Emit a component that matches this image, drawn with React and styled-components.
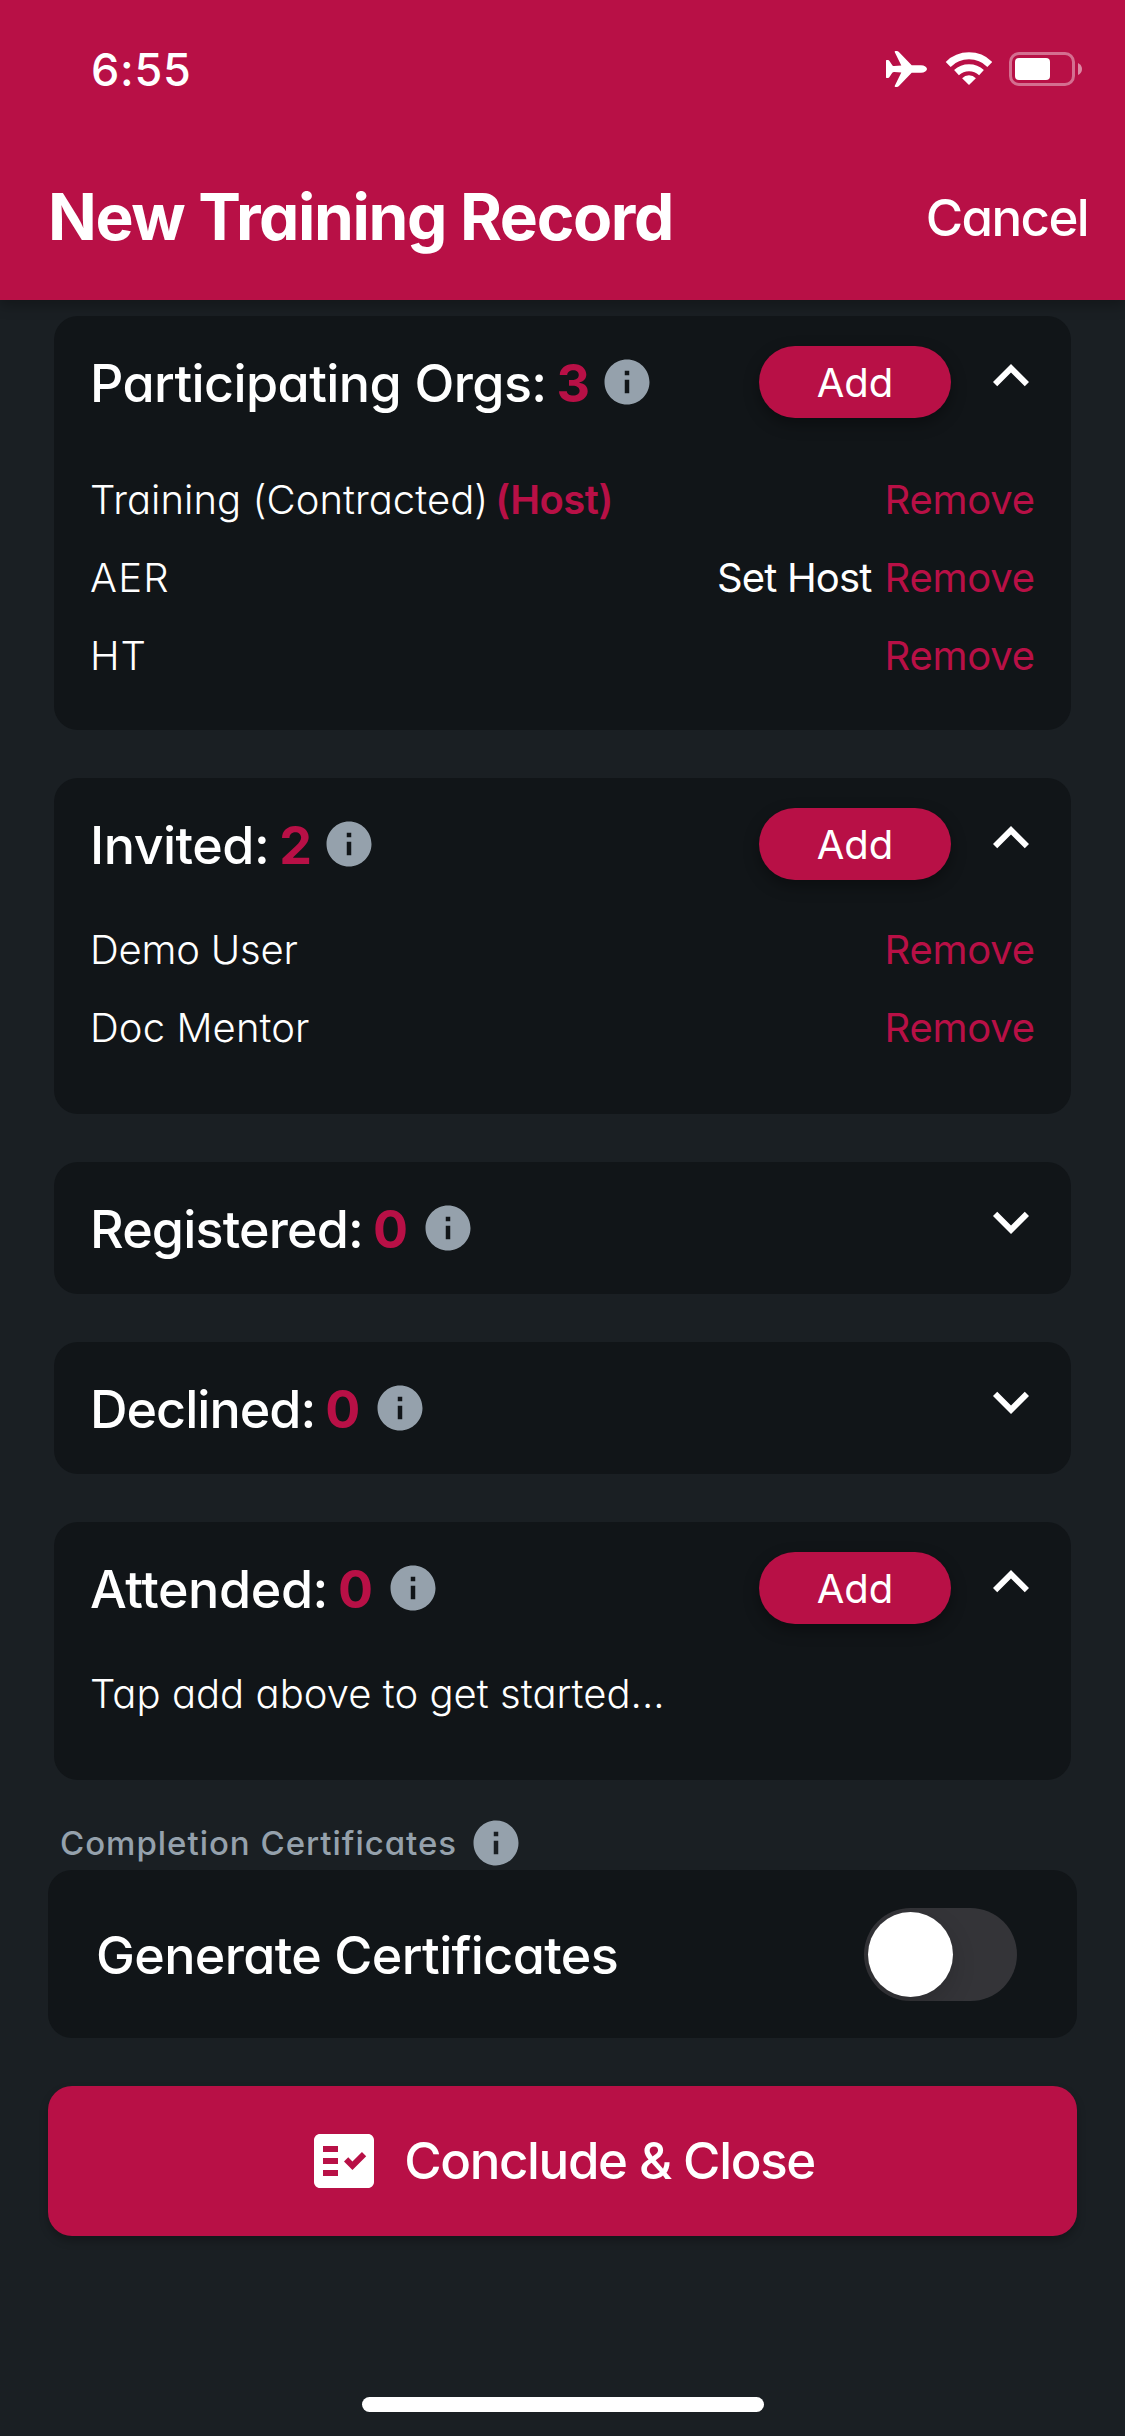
import React, { useState } from "react";
import styled, { createGlobalStyle } from "styled-components";
import { MdExpandLess, MdExpandMore, MdFactCheck, MdInfo } from "react-icons/md";

const color = {
  primary: "#b81046",
  background: "#1a1f23",
  card: "#111518",
  muted: "#95a1ac",
  track: "#343438",
  text: "#ffffff",
};

const GlobalStyle = createGlobalStyle`
  *, *::before, *::after { box-sizing: border-box; }
  body {
    margin: 0;
    background: ${color.background};
    color: ${color.text};
    font-family: Inter, "Liberation Sans", sans-serif;
    font-feature-settings: "cv11";
  }
`;

const Screen = styled.div`
  display: flex;
  flex-direction: column;
  width: 1125px;
  height: 2436px;
  overflow: hidden;
  background: ${color.background};
`;

const TopArea = styled.header`
  flex: none;
  height: 300px;
  background: ${color.primary};
  box-shadow: 0 6px 12px rgba(0, 0, 0, 0.25);
`;

const StatusBar = styled.div`
  display: flex;
  align-items: center;
  justify-content: space-between;
  height: 138px;
  padding: 0 42px 0 91px;
`;

const Clock = styled.span`
  font-size: 45px;
  font-weight: 500;
  letter-spacing: 0.7px;
`;

const StatusIcons = styled.div`
  display: flex;
  align-items: center;
  gap: 17px;

  svg { display: block; }
`;

const TitleBar = styled.div`
  display: flex;
  align-items: center;
  justify-content: space-between;
  height: 162px;
  padding: 0 37px 5px 48px;
`;

const Title = styled.h1`
  margin: 0;
  font-size: 64px;
  font-weight: 700;
  letter-spacing: -1.35px;
`;

const PlainButton = styled.button`
  margin: 0;
  padding: 0;
  border: 0;
  background: none;
  color: inherit;
  font-family: inherit;
  font-feature-settings: inherit;
  white-space: nowrap;
`;

const CancelButton = styled(PlainButton)`
  padding-top: 2px;
  font-size: 51px;
  font-weight: 500;
  letter-spacing: -1.6px;
`;

const Content = styled.main`
  display: flex;
  flex-direction: column;
  padding: 16px 48px 0;
`;

const Sections = styled.div`
  display: flex;
  flex-direction: column;
  gap: 48px;
  padding: 0 6px;
`;

const Card = styled.section`
  padding: 30px 36px ${(p) => p.$bottom}px;
  border-radius: 24px;
  background: ${color.card};
`;

const CardHeader = styled.div`
  display: flex;
  align-items: center;
  height: 72px;
  margin-right: -12px;
`;

const Heading = styled.h2`
  margin: 0;
  padding-top: 2px;
  font-size: 52px;
  font-weight: 500;
  letter-spacing: ${(p) => p.$tracking}px;
  white-space: nowrap;
`;

const Count = styled.span`
  flex: none;
  width: ${(p) => p.$width}px;
  margin-left: 10px;
  padding-top: 2px;
  color: ${color.primary};
  font-size: 52px;
  font-weight: 700;
`;

const InfoIcon = styled(MdInfo)`
  flex: none;
  width: 54px;
  height: 54px;
  color: ${color.muted};
`;

const HeaderActions = styled.div`
  display: flex;
  align-items: center;
  gap: 24px;
  height: 72px;
  margin-left: auto;
`;

const AddButton = styled(PlainButton)`
  width: 192px;
  height: 72px;
  border-radius: 36px;
  background: ${color.primary};
  box-shadow: 0 6px 15px rgba(0, 0, 0, 0.35);
  font-size: 40px;
  font-weight: 400;
`;

const Toggle = styled(PlainButton)`
  height: 84px;
  margin-bottom: 12px;

  svg {
    display: block;
    width: 72px;
    height: 72px;
  }
`;

const List = styled.div`
  padding-top: ${(p) => p.$top}px;
`;

const Row = styled.div`
  display: flex;
  align-items: center;
  height: 78px;
  white-space: nowrap;
`;

const RowName = styled.span`
  font-size: 40px;
  font-weight: 300;
  letter-spacing: ${(p) => p.$tracking || 0}px;
`;

const HostTag = styled.span`
  margin-left: 7px;
  color: ${color.primary};
  font-size: 40px;
  font-weight: 600;
  letter-spacing: -0.5px;
`;

const RowActions = styled.div`
  display: flex;
  gap: 13px;
  margin-left: auto;
`;

const SetHost = styled(PlainButton)`
  font-size: 40px;
  letter-spacing: -0.85px;
`;

const Remove = styled(PlainButton)`
  color: ${color.primary};
  font-size: 40px;
  letter-spacing: -0.2px;
`;

const FieldLabel = styled.div`
  display: flex;
  align-items: center;
  gap: 12px;
  height: 54px;
  margin: 36px 0 0 12px;
  color: ${color.muted};
  font-size: 33px;
  font-weight: 450;
  letter-spacing: 0.98px;
`;

const SwitchCard = styled.section`
  display: flex;
  align-items: center;
  justify-content: space-between;
  height: 168px;
  padding: 0 60px 0 48px;
  border-radius: 24px;
  background: ${color.card};
`;

const SwitchTrack = styled(PlainButton)`
  display: flex;
  align-items: center;
  justify-content: ${(p) => (p.$on ? "flex-end" : "flex-start")};
  width: 153px;
  height: 93px;
  padding: 0 4px;
  border-radius: 47px;
  overflow: hidden;
  background: ${(p) => (p.$on ? color.primary : color.track)};
`;

const SwitchKnob = styled.span`
  width: 85px;
  height: 85px;
  border-radius: 50%;
  background: #ffffff;
  box-shadow: 0 9px 24px rgba(0, 0, 0, 0.15);
`;

const ConcludeButton = styled(PlainButton)`
  display: flex;
  align-items: center;
  justify-content: center;
  gap: 24px;
  height: 150px;
  margin-top: 48px;
  padding: 0 2px 1px 0;
  border-radius: 24px;
  background: ${color.primary};
  box-shadow: 0 5px 9px rgba(0, 0, 0, 0.25);
  font-size: 51px;
  font-weight: 500;
  letter-spacing: -1.35px;

  svg {
    width: 72px;
    height: 72px;
  }
`;

const HomeIndicator = styled.div`
  flex: none;
  width: 402px;
  height: 15px;
  margin: auto auto 24px;
  border-radius: 8px;
  background: #ffffff;
`;

const AirplaneIcon = () => (
  <svg width="42" height="36" viewBox="0 0 42 36" fill="#fff">
    <path d="M0 9.4 Q0 9 .5 9 H2 Q2.8 9 3.3 9.7 L6.3 14.2 Q7 15.2 8.2 15.1 L15.3 14.6 L8.8 1.2 Q8.3 0 9.5 0 H10.8 Q12 0 12.9 1 L25.7 14.3 H35 Q37.6 14.3 39.3 15.6 Q41 16.8 41 18 Q41 19.2 39.3 20.4 Q37.6 21.7 35 21.7 H25.7 L12.9 35 Q12 36 10.8 36 H9.5 Q8.3 36 8.8 34.8 L15.3 21.4 L8.2 20.9 Q7 20.8 6.3 21.8 L3.3 26.3 Q2.8 27 2 27 H.5 Q0 27 0 26.6 Z" />
  </svg>
);

const WifiIcon = () => (
  <svg width="47" height="36" viewBox="-0.8 0 47 36" fill="none" stroke="#fff">
    <path d="M2.4 13.4 A29.6 29.6 0 0 1 44 13.4" strokeWidth="7" />
    <path d="M10.7 21.6 A18.2 18.2 0 0 1 35.7 21.6" strokeWidth="7" />
    <path d="M16.3 27.2 A9.8 9.8 0 0 1 30.1 27.2 L23.2 34 Z" fill="#fff" stroke="none" />
  </svg>
);

const BatteryIcon = () => (
  <svg width="74" height="36" viewBox="0 0 74 36">
    <rect x="1.5" y="2.5" width="63" height="31" rx="8.5" fill="none" stroke="#fff" strokeOpacity="0.4" strokeWidth="3" />
    <rect x="6" y="7" width="35" height="22" rx="4" fill="#fff" />
    <path d="M69 12 Q73 14 73 18 Q73 22 69 24 Z" fill="#fff" fillOpacity="0.5" />
  </svg>
);

const sections = [
  {
    id: "orgs", title: "Participating Orgs:", tracking: -0.58, count: 3, countWidth: 43,
    canAdd: true, open: true, top: 42, bottom: 36,
    rows: [
      { name: "Training (Contracted)", tracking: 0.05, host: true },
      { name: "AER", tracking: 1.2, canHost: true },
      { name: "HT", tracking: 1 },
    ],
  },
  {
    id: "invited", title: "Invited:", tracking: -0.5, count: 2, countWidth: 43,
    canAdd: true, open: true, top: 30, bottom: 48,
    rows: [{ name: "Demo User", tracking: -0.2 }, { name: "Doc Mentor", tracking: 0.1 }],
  },
  { id: "registered", title: "Registered:", tracking: -0.84, count: 0, countWidth: 48, rows: [] },
  { id: "declined", title: "Declined:", tracking: -0.98, count: 0, countWidth: 48, rows: [] },
  {
    id: "attended", title: "Attended:", tracking: -0.4, count: 0, countWidth: 48,
    canAdd: true, open: true, top: 30, bottom: 48, rows: [], empty: "Tap add above to get started...",
  },
];

const Section = ({ data }) => {
  const [open, setOpen] = useState(Boolean(data.open));
  return (
    <Card $bottom={open ? data.bottom ?? 48 : 30}>
      <CardHeader>
        <Heading $tracking={data.tracking}>{data.title}</Heading>
        <Count $width={data.countWidth}>{data.count}</Count>
        <InfoIcon />
        <HeaderActions>
          {data.canAdd && <AddButton>Add</AddButton>}
          <Toggle aria-label={open ? "Collapse" : "Expand"} onClick={() => setOpen(!open)}>
            {open ? <MdExpandLess /> : <MdExpandMore />}
          </Toggle>
        </HeaderActions>
      </CardHeader>
      {open && (
        <List $top={data.top ?? 0}>
          {data.rows.map((row) => (
            <Row key={row.name}>
              <RowName $tracking={row.tracking}>{row.name}</RowName>
              {row.host && <HostTag>(Host)</HostTag>}
              <RowActions>
                {row.canHost && <SetHost>Set Host</SetHost>}
                <Remove>Remove</Remove>
              </RowActions>
            </Row>
          ))}
          {data.empty && (
            <Row>
              <RowName $tracking={0.04}>{data.empty}</RowName>
            </Row>
          )}
        </List>
      )}
    </Card>
  );
};

export default function App() {
  const [generate, setGenerate] = useState(false);
  return (
    <Screen>
      <GlobalStyle />
      <TopArea>
        <StatusBar>
          <Clock>6:55</Clock>
          <StatusIcons>
            <AirplaneIcon />
            <WifiIcon />
            <BatteryIcon />
          </StatusIcons>
        </StatusBar>
        <TitleBar>
          <Title>New Training Record</Title>
          <CancelButton>Cancel</CancelButton>
        </TitleBar>
      </TopArea>
      <Content>
        <Sections>
          {sections.map((s) => (
            <Section key={s.id} data={s} />
          ))}
        </Sections>
        <FieldLabel>
          Completion Certificates
          <InfoIcon />
        </FieldLabel>
        <SwitchCard>
          <Heading $tracking={-0.64}>Generate Certificates</Heading>
          <SwitchTrack
            role="switch"
            aria-checked={generate}
            aria-label="Generate Certificates"
            $on={generate}
            onClick={() => setGenerate(!generate)}
          >
            <SwitchKnob />
          </SwitchTrack>
        </SwitchCard>
        <ConcludeButton>
          <MdFactCheck />
          Conclude &amp; Close
        </ConcludeButton>
      </Content>
      <HomeIndicator />
    </Screen>
  );
}
